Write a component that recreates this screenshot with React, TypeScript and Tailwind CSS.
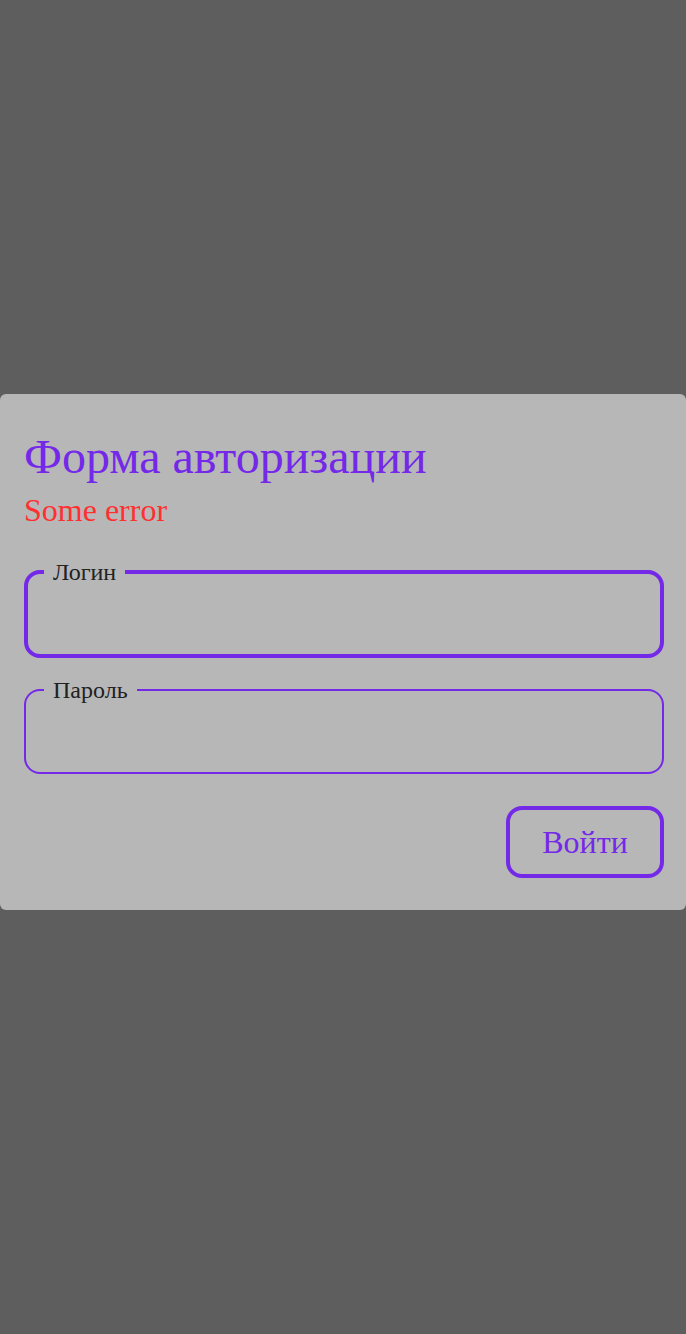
export default function App() {
    return (
        <div
            className="min-h-screen bg-[#5e5e5e] flex flex-col justify-center pb-[30px]"
            style={{ fontFamily: '"Liberation Serif", "Times New Roman", serif' }}
        >
            <form className="bg-[#b7b7b7] rounded-md pl-6 pr-[22px] pt-[35px] pb-8 flex flex-col">
                <h1 className="text-[48px] leading-[56px] text-[#7428e8]">Форма авторизации</h1>
                <p className="text-[32px] leading-[40px] text-[#ff3030] mt-[5px]">Some error</p>

                <fieldset className="mt-[28px] border-4 border-[#7428e8] rounded-2xl">
                    <legend className="ml-[16px] px-[9px] text-[24px] leading-[28px] text-[#222]">Логин</legend>
                    <input className="w-full h-[68px] bg-transparent outline-none px-4 text-[24px]" />
                </fieldset>

                <fieldset className="mt-[18px] border-2 border-[#7428e8] rounded-2xl">
                    <legend className="ml-[18px] px-[9px] text-[24px] leading-[28px] text-[#222]">Пароль</legend>
                    <input type="password" className="w-full h-[68px] bg-transparent outline-none px-4 text-[24px]" />
                </fieldset>

                <div className="flex justify-end mt-8">
                    <button
                        type="button"
                        className="w-[158px] h-[72px] border-4 border-[#7428e8] rounded-2xl text-[32px] text-[#7428e8]"
                    >
                        Войти
                    </button>
                </div>
            </form>
        </div>
    );
}
